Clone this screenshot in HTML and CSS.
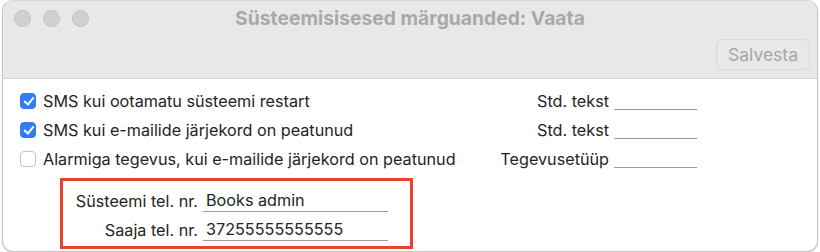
FILE: index.html
```html
<!DOCTYPE html>
<html lang="et">
<head>
<meta charset="UTF-8" />
<title>Süsteemisisesed märguanded: Vaata</title>
<link rel="stylesheet" href="styles.css">
</head>
<body>

<div class="aken">

  <!-- Tiitliriba + tööriistariba -->
  <div class="pealis">
    <div class="tiitel-rida">
      <div class="tuled">
        <span class="tuli"></span>
        <span class="tuli"></span>
        <span class="tuli"></span>
      </div>
      <div class="tiitel">Süsteemisisesed märguanded: Vaata</div>
    </div>
    <div class="toolbar">
      <button class="nupp" disabled>Salvesta</button>
    </div>
  </div>

  <!-- Sisu -->
  <div class="sisu">
    <div class="rida">
      <label class="valik"><span class="kast on"></span>SMS kui ootamatu süsteemi restart</label>
      <div class="vali">
        <span class="silt">Std. tekst</span>
        <span class="joon"></span>
      </div>
    </div>
    <div class="rida">
      <label class="valik"><span class="kast on"></span>SMS kui e-mailide järjekord on peatunud</label>
      <div class="vali">
        <span class="silt">Std. tekst</span>
        <span class="joon"></span>
      </div>
    </div>
    <div class="rida">
      <label class="valik"><span class="kast"></span>Alarmiga tegevus, kui e-mailide järjekord on peatunud</label>
      <div class="vali">
        <span class="silt">Tegevusetüüp</span>
        <span class="joon"></span>
      </div>
    </div>

    <div class="telefonid">
      <div class="tel-rida">
        <span class="tel-silt">Süsteemi tel. nr.</span>
        <span class="tel-vali">Books admin</span>
      </div>
      <div class="tel-rida">
        <span class="tel-silt">Saaja tel. nr.</span>
        <span class="tel-vali">37255555555555</span>
      </div>
    </div>
  </div>

</div>

</body>
</html>
```

FILE: styles.css
```css
body {
  margin: 0; padding: 0;
  font-family: Inter, "Liberation Sans", sans-serif;
  background-color: #ffffff;
  color: #222;
}
.aken {
  margin: 0 2px;
  height: 250px;
  border: 1px solid #c6c6c6;
  border-top-color: #d8d8d8;
  border-radius: 11px;
  overflow: hidden;
  background: #fff;
  box-shadow: 0 1px 2px rgba(0,0,0,0.12);
}
/* Tiitliriba */
.pealis {
  background-color: #e8e8e6;
  height: 77px;
  border-bottom: 1px solid #d6d6d4;
}
.tiitel-rida {
  height: 34px;
  display: flex;
  align-items: center;
  position: relative;
}
.tuled {
  display: flex;
  gap: 12px;
  padding-left: 11px;
}
.tuli {
  width: 17px;
  height: 17px;
  box-sizing: border-box;
  border-radius: 50%;
  background: #d0d0d0;
  border: 1px solid #c0c0c0;
}
.tiitel {
  position: absolute;
  left: 0; right: 0;
  text-align: center;
  font-weight: bold;
  font-size: 19.3px;
  color: #a9a9a9;
}
.toolbar {
  display: flex;
  justify-content: flex-end;
  padding: 4px 7px 0 0;
}
.nupp {
  font-family: inherit;
  font-size: 17.5px;
  color: #a6a6a6;
  background: #e8e8e6;
  border: 1px solid #d9d9d7;
  border-radius: 6px;
  padding: 0 8px;
  width: 94px;
  height: 31px;
}
/* Sisu */
.sisu {
  padding: 7px 0 0 15px;
}
.rida {
  display: flex;
  align-items: center;
  height: 29px;
}
.valik {
  display: flex;
  align-items: center;
  width: 466px;
  font-size: 16.2px;
  color: #242424;
}
.kast {
  width: 16px;
  height: 16px;
  box-sizing: border-box;
  border: 1px solid #c4c4c4;
  border-radius: 4px;
  margin: 0 7px 0 2px;
  background: #fff;
  position: relative;
}
.kast.on {
  background: #2f7cf6;
  border-color: #2f7cf6;
}
.kast.on::after {
  content: "";
  position: absolute;
  left: 4.5px;
  top: 1.5px;
  width: 4px;
  height: 8px;
  border: solid #fff;
  border-width: 0 2.2px 2.2px 0;
  transform: rotate(40deg);
}
.vali {
  display: flex;
  align-items: center;
  width: 213px;
  font-size: 16.2px;
  color: #242424;
}
.silt {
  flex: 1;
  text-align: right;
  padding-right: 5px;
  white-space: nowrap;
}
.joon {
  width: 83px;
  height: 17px;
  border-bottom: 1.5px solid #9a9a9a;
}
/* Telefonid */
.telefonid {
  margin: 5px 0 0 42px;
  width: 347px;
  height: 60px;
  border: 3px solid #e8432d;
  padding: 5px 0 0 0;
  box-sizing: content-box;
}
.tel-rida {
  display: flex;
  align-items: center;
  height: 29px;
  font-size: 16.2px;
  color: #242424;
}
.tel-silt {
  width: 135px;
  text-align: right;
  padding-right: 5px;
}
.tel-vali {
  width: 182px;
  border-bottom: 1.5px solid #9a9a9a;
  padding: 0 0 1px 3px;
}
```
